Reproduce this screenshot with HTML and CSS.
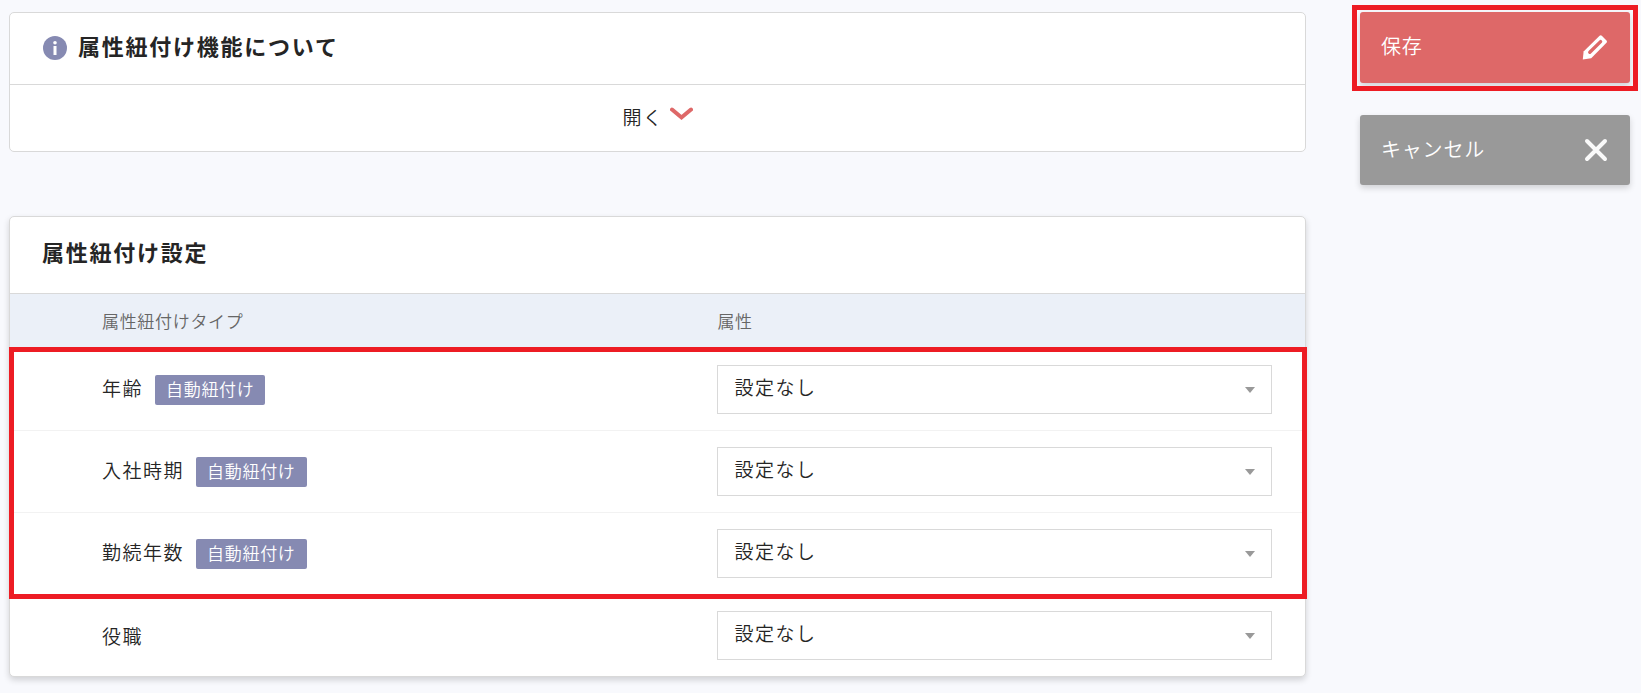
FILE: index.html
```
<!DOCTYPE html>
<html lang="ja">
<head>
  <meta charset="UTF-8" />
  <title>属性紐付け設定</title>
  <link rel="stylesheet" href="styles.css">
</head>
<body>
  <div class="page">
    <main class="main">
      <section class="card">
        <h2 class="card-title about-title">
          <svg class="info-icon" width="24" height="24" viewBox="0 0 24 24" aria-hidden="true">
            <circle cx="12" cy="12" r="12" fill="#868ab2" />
            <circle cx="12" cy="6.7" r="1.8" fill="#fff" />
            <rect x="10.5" y="10" width="3" height="9" fill="#fff" />
          </svg>
          属性紐付け機能について
        </h2>
        <button type="button" class="toggle">
          開く
          <svg class="chevron" width="23" height="14" viewBox="0 0 23 14" aria-hidden="true">
            <path d="M2 2.5 L11.5 10.5 L21 2.5" fill="none" stroke="#de6868" stroke-width="4" stroke-linecap="round" />
          </svg>
        </button>
      </section>

      <section class="card card-raised">
        <h2 class="card-title">属性紐付け設定</h2>
        <table class="settings">
          <thead>
            <tr>
              <th scope="col">属性紐付けタイプ</th>
              <th scope="col" class="col-attr">属性</th>
            </tr>
          </thead>
          <!-- 自動紐付けの対象 -->
          <tbody class="marked">
            <tr>
              <td><label for="age">年齢</label><span class="badge">自動紐付け</span></td>
              <td class="col-attr"><select id="age"><option>設定なし</option></select></td>
            </tr>
            <tr>
              <td><label for="joined">入社時期</label><span class="badge">自動紐付け</span></td>
              <td class="col-attr"><select id="joined"><option>設定なし</option></select></td>
            </tr>
            <tr>
              <td><label for="years">勤続年数</label><span class="badge">自動紐付け</span></td>
              <td class="col-attr"><select id="years"><option>設定なし</option></select></td>
            </tr>
          </tbody>
          <tbody class="last">
            <tr>
              <td><label for="post">役職</label></td>
              <td class="col-attr"><select id="post"><option>設定なし</option></select></td>
            </tr>
          </tbody>
        </table>
      </section>
    </main>

    <aside class="actions">
      <button type="button" class="btn btn-save">
        保存
        <svg width="26" height="26" viewBox="0 0 26 26" aria-hidden="true">
          <path fill="#fff" d="M.8 24.6 L1.6 16.4 L17.6 .7 Q18.7 -.2 19.8 .7 L24.5 5.6 Q25.4 6.7 24.5 7.8 L9.2 23.2 Z" />
          <path stroke="#de6868" stroke-width="3.4" stroke-linecap="round" d="M7.8 17.2 L18.6 6.6" />
        </svg>
      </button>
      <button type="button" class="btn btn-cancel">
        キャンセル
        <svg width="24" height="24" viewBox="0 0 24 24" aria-hidden="true">
          <path d="M3 3 L21 21 M21 3 L3 21" stroke="#fafafa" stroke-width="4" stroke-linecap="round" />
        </svg>
      </button>
    </aside>
  </div>
</body>
</html>
```
FILE: styles.css
```
* {
  box-sizing: border-box;
}

body {
  margin: 0;
  background: #f8f9fd;
  color: #252525;
  font-family: "Noto Sans CJK JP", sans-serif;
  font-size: 19px;
  font-weight: 350;
  line-height: 28px;
  letter-spacing: 0.08em;
}

button,
select {
  font: inherit;
  letter-spacing: inherit;
  color: inherit;
}

.page {
  display: flex;
  align-items: flex-start;
  gap: 54px;
  padding: 12px 11px 16px 9px;
}

.main {
  flex: 1;
  display: flex;
  flex-direction: column;
  gap: 64px;
}

.card {
  background: #fff;
  border: 1px solid #d9d9d9;
  border-radius: 5px;
}

.card-raised {
  box-shadow: 0 3px 6px rgba(0, 0, 0, 0.16);
}

.card-title {
  margin: 0;
  padding: 18px 32px 26px;
  border-bottom: 1px solid #d9d9d9;
  font-size: 22px;
  font-weight: 700;
  line-height: 32px;
  letter-spacing: 0.08em;
}

.about-title {
  display: flex;
  align-items: center;
  gap: 11px;
  padding: 16px 33px 23px;
}

.info-icon {
  margin-top: 6px;
}

.toggle {
  display: flex;
  justify-content: center;
  align-items: center;
  gap: 6px;
  width: 100%;
  height: 66px;
  padding: 0 0 2px;
  border: 0;
  background: none;
  cursor: pointer;
}

.chevron {
  margin-bottom: 6px;
}

.settings {
  width: 100%;
  border-spacing: 0;
  table-layout: fixed;
}

.settings th {
  height: 55px;
  padding: 0 33px 2px 92px;
  background: #ebf0f8;
  color: #666;
  font-size: 17px;
  font-weight: 350;
  letter-spacing: 0.04em;
  line-height: 24px;
  text-align: left;
}

.settings td {
  padding: 16px 33px 16px 92px;
  border-bottom: 1px solid #f2f2f2;
}

.settings .col-attr {
  width: 48%;
  padding-left: 34px;
}

.settings .last td {
  border-bottom: 0;
}

.marked {
  position: relative;
}

.marked::after {
  content: "";
  position: absolute;
  inset: -2px -2px -4px -1px;
  border: 5px solid #ed1c24;
  pointer-events: none;
}

.badge {
  display: inline-block;
  margin-left: 12px;
  padding: 2px 11px 4px;
  border-radius: 2px;
  background: #868ab2;
  color: #fff;
  font-size: 17px;
  letter-spacing: 0.04em;
  line-height: 24px;
}

select {
  display: block;
  width: 100%;
  height: 49px;
  padding: 0 48px 5px 16px;
  border: 1px solid #d9d9d9;
  border-radius: 0;
  appearance: none;
  background: url("data:image/svg+xml,%3Csvg xmlns='http://www.w3.org/2000/svg' width='10' height='6'%3E%3Cpath d='M0 0h10L5 6z' fill='%23999'/%3E%3C/svg%3E") no-repeat right 16px center #fff;
}

.actions {
  display: flex;
  flex-direction: column;
  gap: 32px;
  width: 270px;
}

.btn {
  position: relative;
  display: flex;
  justify-content: space-between;
  align-items: center;
  width: 100%;
  height: 70px;
  padding: 0 22px 3px 21px;
  border: 0;
  border-radius: 3px;
  color: #fff;
  font-size: 20px;
  letter-spacing: 0.04em;
  box-shadow: 0 3px 6px rgba(0, 0, 0, 0.16);
  cursor: pointer;
}

.btn svg {
  margin-top: 3px;
}

.btn-save {
  height: 71px;
  background: #de6868;
}

.btn-save::after {
  content: "";
  position: absolute;
  inset: -7px -8px -8px;
  border: 5px solid #ed1c24;
}

.btn-cancel {
  background: #999;
}
```
